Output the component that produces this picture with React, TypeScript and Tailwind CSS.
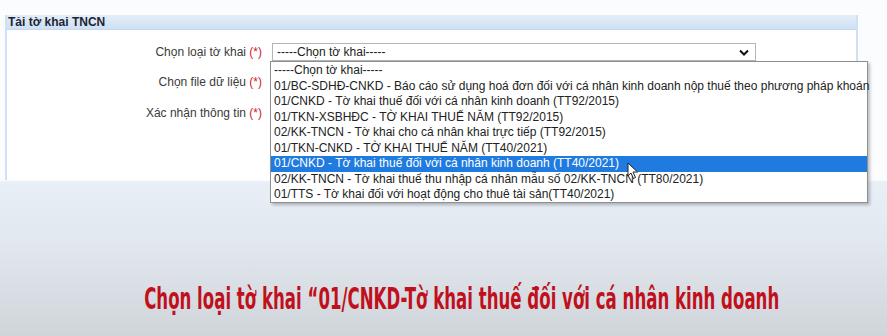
import React from "react";

const items = [
  "-----Chọn tờ khai-----",
  "01/BC-SDHĐ-CNKD - Báo cáo sử dụng hoá đơn đối với cá nhân kinh doanh nộp thuế theo phương pháp khoán",
  "01/CNKD - Tờ khai thuế đối với cá nhân kinh doanh (TT92/2015)",
  "01/TKN-XSBHĐC - TỜ KHAI THUẾ NĂM (TT92/2015)",
  "02/KK-TNCN - Tờ khai cho cá nhân khai trực tiếp (TT92/2015)",
  "01/TKN-CNKD - TỜ KHAI THUẾ NĂM (TT40/2021)",
  "01/CNKD - Tờ khai thuế đối với cá nhân kinh doanh (TT40/2021)",
  "02/KK-TNCN - Tờ khai thuế thu nhập cá nhân mẫu số 02/KK-TNCN (TT80/2021)",
  "01/TTS - Tờ khai đối với hoạt động cho thuê tài sản(TT40/2021)",
];

function Label({ text }: { text: string }) {
  return (
    <div className="text-right text-[12px] text-[#3a3a3a] pr-[10px]">
      {text} <span className="text-[#d0202a]">(*)</span>
    </div>
  );
}

export default function App() {
  return (
    <div
      className="relative w-[887px] h-[336px] overflow-hidden bg-[linear-gradient(to_bottom,#fbfcfd_0px,#fbfcfd_180px,#e8eff7_182px,#e2e8ef_240px,#d0d5da_336px)]"
      style={{ fontFamily: '"Liberation Sans", Arial, sans-serif' }}
    >
      <div className="h-[15px]" />
      <div className="ml-[5px] w-[853px] border-l-[2px] border-r-[2px] border-[#cfe0f3]">
        <div className="h-[15px] bg-[linear-gradient(to_bottom,#e4eef9,#cfe0f4)] border-b border-[#c3d7ee] pl-[1px] text-[12px] font-bold leading-[15px] text-[#1d2433]">
          Tải tờ khai TNCN
        </div>
        <div className="h-[150px] bg-white pt-[13px]">
          <div className="grid grid-cols-[265px_1fr] items-center">
            <div className="h-[18px] flex items-center justify-end">
              <Label text="Chọn loại tờ khai" />
            </div>
            <div className="h-[18px] w-[484px] border border-[#b5b5b5] bg-white flex items-center justify-between pl-[4px] pr-[6px] text-[12px] text-[#222]">
              <span>-----Chọn tờ khai-----</span>
              <svg width="10" height="7" viewBox="0 0 10 7">
                <path d="M1 1.5 L5 5.5 L9 1.5" stroke="#111" strokeWidth="2" fill="none" />
              </svg>
            </div>
            <div className="h-[29px] pt-[12px] flex items-center justify-end">
              <Label text="Chọn file dữ liệu" />
            </div>
            <div />
            <div className="h-[31px] pt-[15px] flex items-center justify-end">
              <Label text="Xác nhận thông tin" />
            </div>
            <div />
          </div>
        </div>
      </div>

      {/* dropdown list overlay */}
      <div className="absolute left-[270px] top-[61px] w-[598px] h-[142px] bg-white border border-[#8f8f8f] shadow-[2px_2px_3px_rgba(0,0,0,0.25)] pt-[1px]">
        {items.map((t, i) => (
          <div
            key={i}
            className={
              "h-[15.5px] leading-[15.5px] pl-[3px] text-[12px] whitespace-nowrap " +
              (i === 6 ? "bg-[#1f7be0] text-white" : "text-[#222]")
            }
          >
            {t}
          </div>
        ))}
        <svg className="absolute left-[356px] top-[100px]" width="12" height="18" viewBox="0 0 12 18">
          <path d="M1 1 L1 14 L4 11 L6.5 16.5 L8.5 15.5 L6 10 L10.5 10 Z" fill="#fff" stroke="#222" strokeWidth="1" />
        </svg>
      </div>

      {/* caption */}
      <div className="absolute left-0 right-0 top-[280px] flex justify-center pl-[37px]">
        <div
          className="text-[31px] font-bold text-[#c0101c] whitespace-nowrap origin-center scale-x-[0.595] leading-[36px]"
          style={{ fontFamily: '"Liberation Sans Narrow", "DejaVu Sans Condensed", "Liberation Sans", sans-serif' }}
        >
          Chọn loại tờ khai “01/CNKD-Tờ khai thuế đối với cá nhân kinh doanh
        </div>
      </div>
    </div>
  );
}
